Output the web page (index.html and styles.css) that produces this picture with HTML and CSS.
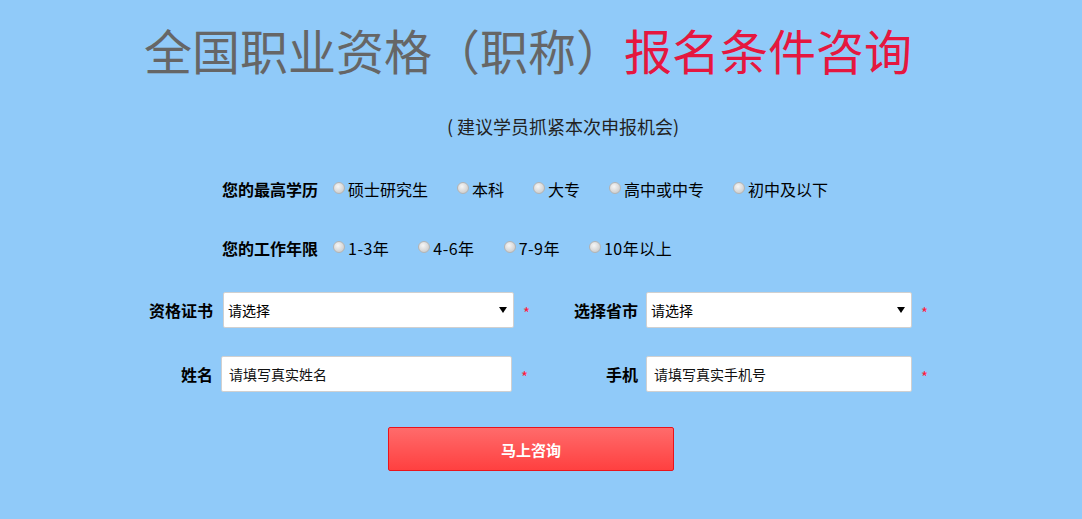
FILE: index.html
```html
<!DOCTYPE html>
<html lang="zh-CN">

<head>
    <meta charset="utf-8">
    <title>报名条件咨询</title>
    <link rel="stylesheet" href="styles.css">
</head>

<body>
    <div id="container">
        <!-- 标题 -->
        <h1 class="title">全国职业资格（职称）<span class="title-red">报名条件咨询</span></h1>
        <p class="subtitle">( 建议学员抓紧本次申报机会)</p>

        <form id="applyForm">
            <!-- 学历 -->
            <div class="radio-row">
                <b class="radio-label">您的最高学历</b>
                <label class="opt"><input type="radio" name="edu">硕士研究生</label>
                <label class="opt"><input type="radio" name="edu">本科</label>
                <label class="opt"><input type="radio" name="edu">大专</label>
                <label class="opt"><input type="radio" name="edu">高中或中专</label>
                <label class="opt"><input type="radio" name="edu">初中及以下</label>
            </div>

            <!-- 工作年限 -->
            <div class="radio-row row-years">
                <b class="radio-label">您的工作年限</b>
                <label class="opt"><input type="radio" name="years">1-3年</label>
                <label class="opt"><input type="radio" name="years">4-6年</label>
                <label class="opt"><input type="radio" name="years">7-9年</label>
                <label class="opt"><input type="radio" name="years">10年以上</label>
            </div>

            <!-- 下拉选择 -->
            <div class="field-row">
                <div class="field">
                    <label class="field-label">资格证书</label>
                    <span class="select-box wide">
                        <select><option>请选择</option></select>
                    </span>
                    <span class="star">*</span>
                </div>
                <div class="field">
                    <label class="field-label">选择省市</label>
                    <span class="select-box narrow">
                        <select><option>请选择</option></select>
                    </span>
                    <span class="star">*</span>
                </div>
            </div>

            <!-- 姓名 手机 -->
            <div class="field-row row-inputs">
                <div class="field">
                    <label class="field-label">姓名</label>
                    <input type="text" class="text-input wide-input" placeholder="请填写真实姓名">
                    <span class="star">*</span>
                </div>
                <div class="field">
                    <label class="field-label">手机</label>
                    <input type="text" class="text-input narrow" placeholder="请填写真实手机号">
                    <span class="star">*</span>
                </div>
            </div>

            <!-- 提交按钮 -->
            <div class="btn-row">
                <button type="button" class="submit-btn">马上咨询</button>
            </div>
        </form>
    </div>
</body>

</html>
```

FILE: styles.css
```css
/* 页面基础样式 */
body {
    margin: 0;
    background-color: #90caf9;
    font-family: "Microsoft YaHei", "Noto Sans CJK SC", sans-serif;
    color: #000;
}

#container {
    width: 1082px;
    height: 519px;
}

/* 标题 */
.title {
    margin: 25px 0 0 144px;
    font-size: 48px;
    line-height: 48px;
    font-weight: normal;
    color: #666666;
    white-space: nowrap;
}

.title-red {
    color: #e5173f;
}

.subtitle {
    margin: 44px 0 0 447px;
    font-size: 18px;
    line-height: 18px;
    color: #222;
}

/* 单选行 */
.radio-row {
    display: flex;
    align-items: center;
    margin: 42px 0 0 222px;
    height: 24px;
    font-size: 16px;
}

.row-years {
    margin-top: 35px;
}

.radio-label {
    width: 111px;
}

.opt {
    display: flex;
    align-items: center;
    margin-right: 29px;
    cursor: pointer;
}

.row-years .opt {
    margin-right: 29px;
    letter-spacing: 0.5px;
}

.opt input {
    appearance: none;
    -webkit-appearance: none;
    width: 12px;
    height: 12px;
    margin: 0 3px 2px 0;
    border-radius: 50%;
    border: 1px solid #b4b4b4;
    background: radial-gradient(circle at 40% 35%, #f6f6f6, #d2d2d2 70%, #bcbcbc);
}

/* 表单行 */
.field-row {
    display: flex;
    margin: 32px 0 0 140px;
}

.row-inputs {
    margin-top: 28px;
}

.field {
    display: flex;
    align-items: center;
    width: 425px;
}

.field-label {
    width: 73px;
    text-align: right;
    font-size: 16px;
    font-weight: bold;
}

.select-box {
    position: relative;
    margin-left: 10px;
}

.field:nth-child(2) .select-box {
    margin-left: 8px;
}

/* 下拉箭头 */
.select-box::after {
    content: "";
    position: absolute;
    right: 7px;
    top: 15px;
    border-left: 4px solid transparent;
    border-right: 4px solid transparent;
    border-top: 6px solid #000;
    pointer-events: none;
}

.select-box select {
    appearance: none;
    -webkit-appearance: none;
    display: block;
    height: 36px;
    padding: 0 0 0 4px;
    border: 1px solid #d0d0d0;
    border-radius: 2px;
    background-color: #fff;
    font-family: inherit;
    font-size: 14px;
    color: #000;
}

.wide select {
    width: 291px;
}

.narrow select {
    width: 266px;
}

.text-input {
    box-sizing: border-box;
    height: 36px;
    margin-left: 8px;
    padding: 0 0 0 7px;
    border: 1px solid #d0d0d0;
    border-radius: 2px;
    background-color: #fff;
    font-family: inherit;
    font-size: 14px;
}

.text-input::placeholder {
    color: #111;
}

.wide-input {
    width: 291px;
}

input.narrow {
    width: 266px;
}

.star {
    margin-left: 9px;
    padding-top: 5px;
    font-size: 15px;
    color: #ff1a3c;
}

/* 提交按钮 */
.btn-row {
    margin: 35px 0 0 388px;
}

.submit-btn {
    width: 286px;
    height: 44px;
    border: 1px solid #e8141c;
    border-radius: 2px;
    background: linear-gradient(to bottom, #ff6b6b, #ff4040);
    color: #fff;
    font-family: inherit;
    font-size: 15px;
    font-weight: bold;
    cursor: pointer;
}
```
